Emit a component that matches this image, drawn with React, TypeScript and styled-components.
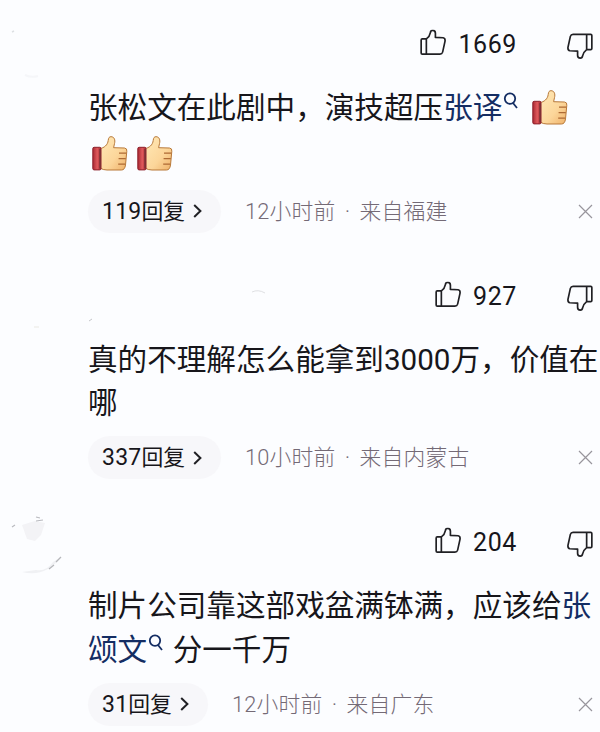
import React from "react";
import styled, { createGlobalStyle } from "styled-components";

const GlobalStyle = createGlobalStyle`
    body {
        margin: 0;
        background-color: #fcfdff;
        overflow: hidden;
    }
`;

const Feed = styled.main`
    display: flex;
    flex-direction: column;
    gap: 47px;
    box-sizing: border-box;
    width: 600px;
    height: 732px;
    padding-top: 28px;
    overflow: hidden;
    background-color: #fcfdff;
    color: #17161b;
    font-family: Roboto, "Noto Sans CJK SC", sans-serif;
`;

const Comment = styled.article`
    display: grid;
    grid-template-columns: 88px 512px;
    flex-shrink: 0;
`;

const Avatar = styled.svg`
    width: 88px;
    height: 70px;
    overflow: visible;
`;

const Votes = styled.div`
    display: flex;
    align-items: center;
    justify-content: flex-end;
    height: 32px;
    padding-right: 7px;
`;

const Count = styled.span`
    margin: 0 50px 0 12px;
    padding-top: 2px;
    font-size: 25px;
    line-height: 32px;
    letter-spacing: 0.6px;
`;

const ThumbIcon = styled.svg<{ $down?: boolean }>`
    width: 26px;
    height: 26px;
    fill: none;
    stroke: #202024;
    stroke-width: 1.75;
    stroke-linejoin: round;
    transform: ${({ $down }) => ($down ? "translateY(2px) rotate(180deg)" : "translateY(-1.5px)")};
`;

const Body = styled.div`
    padding-top: 26px;
`;

const Line = styled.p<{ $height?: number }>`
    display: flex;
    align-items: center;
    box-sizing: border-box;
    height: ${({ $height }) => $height ?? 43.5}px;
    margin: 0;
    padding-top: 2px;
    font-size: 29.6px;
    line-height: 43.5px;
    white-space: nowrap;
`;

const Link = styled.span`
    color: #142d63;
`;

const SearchIcon = styled.svg`
    width: 15px;
    height: 18px;
    margin: -15px 9.5px 0 1px;
    fill: none;
    stroke: #142d63;
    stroke-width: 1.8;
`;

const Emoji = styled.svg`
    width: 36px;
    height: 35px;
    margin: -3px 5px 0 4px;
`;

const Footer = styled.footer`
    display: flex;
    align-items: center;
    height: 43px;
    padding: 11.5px 7px 0 0;
`;

const ReplyButton = styled.button<{ $width: number }>`
    display: flex;
    align-items: center;
    box-sizing: border-box;
    width: ${({ $width }) => $width}px;
    height: 43px;
    padding: 0 0 0 14px;
    border: 0;
    border-radius: 22px;
    background-color: #f7f7fa;
    color: #17161b;
    font-family: inherit;
    font-size: 21.8px;
    white-space: nowrap;
`;

const ReplyLabel = styled.span`
    line-height: 43px;
`;

const ReplyCount = styled.span`
    font-size: 23px;
    letter-spacing: 0.2px;
`;

const Chevron = styled.svg`
    width: 9px;
    height: 14px;
    margin: 0 19px 0 auto;
    fill: none;
    stroke: #202024;
    stroke-width: 2;
`;

const Meta = styled.div`
    display: flex;
    flex: 1;
    margin-left: 24px;
    padding-top: 1px;
    color: #746a76;
    font-size: 21.8px;
    font-weight: 300;
    line-height: 42px;
    letter-spacing: 0.2px;
`;

const Dot = styled.span`
    width: 24px;
    text-align: center;
`;

const CloseIcon = styled.svg`
    width: 15px;
    height: 15px;
    stroke: #98959c;
    stroke-width: 1.2;
`;

const Thumb: React.FC<{ down?: boolean }> = ({ down }) => (
    <ThumbIcon viewBox="0 0 27 27" $down={down}>
        <path d="M6.6 9.8H2.4Q1.2 9.8 1.2 11V24.3Q1.2 25.5 2.4 25.5H20.7Q22.9 25.5 23.5 23.5L26 12Q26.3 9 24 8.6L16 8.2V4Q16 1 13.2 1Q11.1 1 10.8 3.2C10.3 6.2 8.6 8.3 6.6 9.8V25.5" />
    </ThumbIcon>
);

const Search: React.FC = () => (
    <SearchIcon viewBox="0 0 15 18">
        <circle cx="7" cy="6.6" r="5.2" />
        <path d="M10 11L14 16" />
    </SearchIcon>
);

const ThumbEmoji: React.FC = () => (
    <Emoji viewBox="0 0 36 35">
        <defs>
            <linearGradient id="skin" x1="0" y1="0" x2="1" y2="1">
                <stop offset="0" stopColor="#ffe9b8" />
                <stop offset="0.6" stopColor="#fcd69a" />
                <stop offset="1" stopColor="#eeb068" />
            </linearGradient>
            <linearGradient id="cuff" x1="0" y1="0" x2="1" y2="0">
                <stop offset="0" stopColor="#a92833" />
                <stop offset="0.55" stopColor="#df5a5c" />
                <stop offset="1" stopColor="#a7212c" />
            </linearGradient>
        </defs>
        <path
            d="M8 12.5C12 12 15.7 9 16.2 4.5C16.5 1.7 17.3.7 19 .7C22.3.7 23.5 4 22.5 7.6L21.6 11.7L32.5 12Q35.3 12.3 34.8 15.3L33.5 29Q32.8 34 29.5 34H15Q11 34 8 32Z"
            fill="url(#skin)"
            stroke="#b87939"
            strokeWidth="1"
        />
        <path d="M27 17.2H34.2M26.6 22.7H33.8M26.2 28.2H33" stroke="#ad6a35" strokeWidth="1.2" />
        <rect x="0.8" y="11.3" width="8.2" height="22.6" rx="1.3" fill="url(#cuff)" stroke="#8d202a" />
        <path d="M8 13V32.5" stroke="#6f3538" strokeWidth="1.2" />
    </Emoji>
);

interface CommentItemProps {
    likes: number;
    replies: number;
    buttonWidth: number;
    time: string;
    place: string;
    avatar: React.ReactNode;
    children: React.ReactNode;
}

const CommentItem: React.FC<CommentItemProps> = ({ likes, replies, buttonWidth, time, place, avatar, children }) => (
    <Comment>
        <Avatar viewBox="0 0 88 70">{avatar}</Avatar>
        <div>
            <Votes>
                <Thumb />
                <Count>{likes}</Count>
                <Thumb down />
            </Votes>
            <Body>{children}</Body>
            <Footer>
                <ReplyButton $width={buttonWidth}>
                    <ReplyLabel>
                        <ReplyCount>{replies}</ReplyCount>回复
                    </ReplyLabel>
                    <Chevron viewBox="0 0 9 14">
                        <path d="M1.2 1L7.4 7L1.2 13" />
                    </Chevron>
                </ReplyButton>
                <Meta>
                    {time}
                    <Dot>·</Dot>
                    来自{place}
                </Meta>
                <CloseIcon viewBox="0 0 15 15">
                    <path d="M1 1L14 14M14 1L1 14" />
                </CloseIcon>
            </Footer>
        </div>
    </Comment>
);

const App: React.FC = () => {
    return (
        <>
            <GlobalStyle />
            <Feed>
                <CommentItem
                    likes={1669}
                    replies={119}
                    buttonWidth={133}
                    time="12小时前"
                    place="福建"
                    avatar={
                        <>
                            <path d="M12 4L14 3" stroke="#dde0e3" strokeWidth="1.5" />
                            <path d="M25 47Q31 50 38 48" fill="none" stroke="#f5f6f9" strokeWidth="2" />
                        </>
                    }
                >
                    <Line>
                        张松文在此剧中，演技超压<Link>张译</Link>
                        <Search />
                        <ThumbEmoji />
                    </Line>
                    <Line $height={48.5}>
                        <ThumbEmoji />
                        <ThumbEmoji />
                    </Line>
                </CommentItem>
                <CommentItem
                    likes={927}
                    replies={337}
                    buttonWidth={133}
                    time="10小时前"
                    place="内蒙古"
                    avatar={
                        <>
                            <path d="M89 41L92 39" stroke="#c5c6ca" />
                            <path d="M252 12Q258 9 265 13" fill="none" stroke="#dfe0e3" />
                            <path d="M34 47H39" stroke="#f3f3f1" strokeWidth="2" />
                        </>
                    }
                >
                    <Line>真的不理解怎么能拿到3000万，价值在</Line>
                    <Line>哪</Line>
                </CommentItem>
                <CommentItem
                    likes={204}
                    replies={31}
                    buttonWidth={120}
                    time="12小时前"
                    place="广东"
                    avatar={
                        <>
                            <path d="M22 -1L35 -5L45 -3L41 9L35 15L27 13Z" fill="#f3f3f6" />
                            <path d="M12 1L15 -1M36 -5L43 -6M36 -9L40 -8" stroke="#b9babf" strokeWidth="1.2" />
                            <path d="M22 46Q45 52 61 31L53 36Q46 46 36 44Z" fill="#f0f1f4" />
                            <path d="M56 36L61 31M49 43L54 39" stroke="#b5b6ba" strokeWidth="1.3" />
                        </>
                    }
                >
                    <Line>
                        制片公司靠这部戏盆满钵满，应该给<Link>张</Link>
                    </Line>
                    <Line>
                        <Link>颂文</Link>
                        <Search />
                        分一千万
                    </Line>
                </CommentItem>
            </Feed>
        </>
    );
};

export default App;
